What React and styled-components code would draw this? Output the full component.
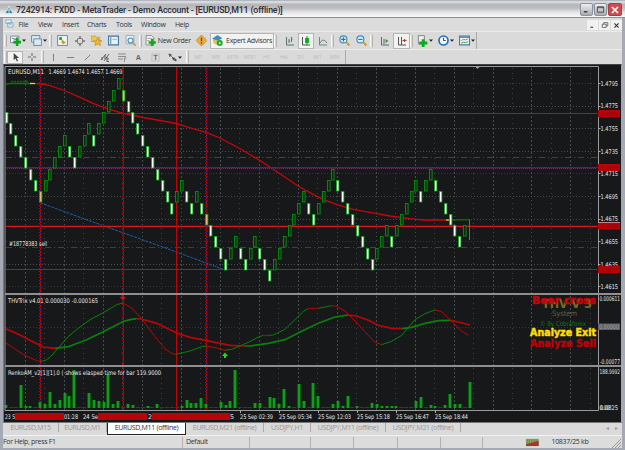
import React from 'react'
import styled, { createGlobalStyle } from 'styled-components'

const GlobalStyle = createGlobalStyle`
    * {
        box-sizing: border-box;
    }
    body {
        margin: 0;
        overflow: hidden;
        background: #dedede;
    }
`

const Frame = styled.div`
    width: 625px;
    height: 450px;
    display: flex;
    flex-direction: column;
    padding: 0 3px 2px;
    background: #a4a9b4;
    font-family: 'Open Sans', 'Noto Sans', sans-serif;
    font-size: 7px;
    letter-spacing: -0.32px;
    line-height: 10px;
    color: #333;
    white-space: nowrap;
`

const TitleBar = styled.header`
    height: 18px;
    flex: none;
    margin: 0 -3px;
    padding: 2px 3px 0 4px;
    display: flex;
    align-items: center;
    border-bottom: 1px solid #8a8f9a;
    background: linear-gradient(#8b929f 0, #d8dade 1px, #d4d5d8 3px, #b7b7b9 4px, #bdbdbf 8px, #e3e3e4 12px, #fafafa 17px);
`

const Title = styled.h1`
    margin: 0 auto 0 2px;
    font-family: Roboto, sans-serif;
    font-size: 8.8px;
    font-weight: 500;
    letter-spacing: -0.17px;
    color: #2c2e36;
`

const WinButton = styled.button`
    width: ${p => (p.$close ? 14 : 13)}px;
    height: 13px;
    margin-left: 1px;
    padding: 0;
    display: grid;
    place-items: center;
    color: ${p => (p.$close ? '#fff' : '#333')};
    border: 1px solid ${p => (p.$close ? '#a83e42' : '#8d929e')};
    border-radius: 2px;
    background: ${p => (p.$close ? '#cf4c50' : 'linear-gradient(#eeeef0, #a9abb3)')};
`

const MenuBar = styled.nav`
    height: 13px;
    flex: none;
    padding: 1px 0 0 2px;
    display: flex;
    align-items: center;
    background: #dcdcdd;
`

const MenuItem = styled.span`
    width: ${p => p.$w}px;
`

const ChildButtons = styled.div`
    display: flex;
    gap: 1px;
    margin-left: auto;
`

const ChildButton = styled.span`
    width: 11px;
    height: 10px;
    display: grid;
    place-items: center;
    background: #f1f1f1;
`

const Toolbar = styled.div`
    height: ${p => p.$h}px;
    flex: none;
    padding-left: 1px;
    display: flex;
    align-items: center;
    background: #dadadb;
    border-top: 1px solid #ececec;
`

const Strip = styled.div`
    width: ${p => p.$w}px;
    height: 100%;
    display: flex;
    align-items: center;
    border-right: 1px solid #aaa;
`

const Tool = styled.span`
    width: ${p => p.$w || 17}px;
    height: ${p => p.$h || 16}px;
    display: flex;
    align-items: center;
    justify-content: center;
    gap: ${p => p.$gap || 0}px;
    flex: none;
    background: ${p => (p.$on ? '#f2f2f2' : 'transparent')};
    border: 1px solid ${p => (p.$on ? '#b5b5b5' : 'transparent')};
`

const Grip = styled.i`
    width: 3px;
    height: 12px;
    flex: none;
    margin: 0 ${p => p.$gap || 0}px 0 0;
    border-left: 1px solid #f8f8f8;
    border-right: 1px solid #b7b2a8;
`

const Period = styled.span`
    width: 17px;
    text-align: center;
    font-size: 6px;
    color: #bdbbb7;
`

const ChartArea = styled.main`
    height: 358px;
    flex: none;
    border-left: 1px solid #777;
    border-right: 1px solid #aaa;
    border-top: 1px solid #444;
    background: #17181a;
    & > svg {
        display: block;
    }
`

const Tabs = styled.div`
    height: 13px;
    flex: none;
    display: flex;
    align-items: flex-start;
    background: #dadada;
    color: #9b9791;
    border-top: 1px solid #777;
`

const Tab = styled.span`
    width: ${p => p.$w}px;
    height: ${p => (p.$active ? 12 : 9)}px;
    line-height: 10px;
    text-align: center;
    color: ${p => (p.$active ? '#333' : 'inherit')};
    background: ${p => (p.$active ? '#fff' : 'transparent')};
    border-right: 1px solid ${p => (p.$active ? '#222' : '#aaa')};
    border-left: ${p => (p.$active ? '1px solid #222' : 'none')};
    border-bottom: ${p => (p.$active ? '1px solid #222' : 'none')};
`

const TabArrows = styled.span`
    margin-left: auto;
    padding-right: 4px;
    display: flex;
    gap: 7px;
    font-size: 6px;
`

const StatusBar = styled.footer`
    flex: 1;
    display: flex;
    align-items: center;
    background: #dcdcdc;
    border-top: 1px solid #f2f2f2;
`

const StatusCell = styled.span`
    width: ${p => p.$w}px;
    height: 11px;
    padding-left: ${p => p.$pad || 0}px;
    display: flex;
    align-items: center;
    gap: 12px;
    border-right: 1px solid ${p => (p.$last ? 'transparent' : '#b5b2ac')};
`

const SizeGrip = styled.svg`
    margin: auto 1px 0 auto;
`

const LEFT = 4
const RIGHT = 621

// top level of every renko brick, counted in bricks down from the high
const bricks = [
    3, 4, 5, 6, 7, 8, 9, 10, 9, 8, 7, 6, 5, 6, 7, 6, 5, 4, 5, 4, 3, 2, 1, 0,
    1, 2, 3, 4, 5, 6, 7, 8, 9, 10, 11, 10, 9, 10, 11, 10, 11, 12, 13, 14, 15, 16, 15, 14,
    15, 16, 15, 14, 15, 16, 17, 16, 15, 14, 13, 12, 11, 10, 11, 12, 11, 10, 9, 8, 9, 10, 11, 12,
    13, 14, 15, 16, 15, 14, 13, 14, 13, 12, 11, 10, 9, 10, 9, 8, 9, 10, 11, 12, 13, 14, 13,
]
const marked = [7, 24, 41]

const volumes = {
    0: 3, 3: 23, 4: 2, 5: 2, 7: 6, 8: 4, 9: 16, 10: 4, 11: 8, 12: 15, 13: 12, 14: 38, 17: 15, 18: 8, 19: 7,
    20: 6, 21: 34, 22: 4, 23: 7, 25: 4, 26: 3, 29: 2, 31: 4, 36: 2, 37: 8, 38: 5, 39: 5, 40: 10, 41: 4,
    44: 6, 45: 3, 46: 7, 47: 38, 51: 5, 52: 5, 54: 11, 55: 10, 56: 4, 57: 19, 58: 2, 60: 24, 61: 7, 63: 25, 64: 12,
    67: 4, 68: 7, 69: 2, 70: 12, 72: 2, 75: 5, 76: 4, 77: 2, 78: 2, 79: 2, 80: 2, 84: 7, 85: 11, 87: 3, 88: 2,
    90: 3, 91: 14, 92: 4, 93: 4, 95: 26,
}

const barX = i => 6 + 4.88 * i
const levelY = k => 78.2 + 11.3 * k

const RED = '#bd0408'
const GREEN = '#0b800b'

// oscillator curves, three units to a pixel
const slow = [
    [RED, '18,122 60,141 100,162 130,177 165,181'],
    [GREEN, '165,181 205,176 260,155 310,131 368,101 390,95 410,92'],
    [RED, '410,92 425,93 470,106 530,135 570,148 620,158 690,172 735,174'],
    [GREEN, '735,174 750,174 805,166 855,155 905,130 955,106 1005,87 1045,81'],
    [RED, '1045,81 1070,84 1105,97 1135,112 1175,121 1205,122'],
    [GREEN, '1205,122 1235,118 1275,106 1315,98 1350,97'],
    [RED, '1350,97 1375,102 1410,111'],
]
const fast = [
    [RED, '18,165 70,200 110,218 120,220'],
    [GREEN, '120,220 135,218 150,208 175,180 205,145 240,117 270,95 310,74 350,50 368,45'],
    [RED, '368,45 395,60 425,92 460,140 495,183 515,196 528,199'],
    [GREEN, '528,199 570,189 605,176 620,174'],
    [RED, '620,174 650,180 675,187'],
    [GREEN, '675,187 695,184 745,163 775,147 790,142'],
    [RED, '790,142 805,142'],
    [GREEN, '805,142 820,141 855,124 885,95 910,70 925,62'],
    [RED, '925,61 955,61'],
    [GREEN, '955,61 995,53'],
    [RED, '995,53 1010,55 1035,69 1065,99 1105,142 1123,162 1145,170'],
    [GREEN, '1145,170 1175,160 1205,142 1245,95 1275,77 1305,66'],
    [RED, '1305,66 1325,71 1345,90 1385,130 1405,141'],
]

const Txt = ({ x, y, w, size = 6.4, fill = '#e6e6e6', children, ...rest }) => (
    <text x={x} y={y} textLength={w} lengthAdjust="spacingAndGlyphs" fontSize={size} fill={fill} {...rest}>
        {children}
    </text>
)

const Grid = () => (
    <g stroke="#4b5358" strokeWidth="1" shapeRendering="crispEdges">
        {Array.from({ length: 30 }, (_, n) => (
            <line
                key={n}
                x1={Math.round(25 + 19.48 * n) + 0.5} x2={Math.round(25 + 19.48 * n) + 0.5}
                y1="68" y2="410"
                strokeDasharray={n % 2 ? '1 4' : '1.500 2.500'}
                opacity={n % 2 ? 0.7 : 0.9}
            />
        ))}
        {Array.from({ length: 10 }, (_, n) => (
            <line
                key={n}
                x1="6" x2="597"
                y1={Math.round(83 + 22.6 * n) + 0.5} y2={Math.round(83 + 22.6 * n) + 0.5}
                strokeDasharray="1 2"
                opacity={[0, 4, 7, 9].includes(n) ? 0.55 : 0.9}
            />
        ))}
        <line x1="6" x2="597" y1="327.5" y2="327.5" strokeDasharray="1 2" opacity="0.5" />
    </g>
)

const Levels = () => (
    <g fill="none" stroke="#c80a0e" strokeWidth="1" shapeRendering="crispEdges">
        <path d="M6 157.5H597" strokeDasharray="6 3 1 3" />
        <path d="M6 167.500H597" strokeDasharray="1 1" />
        <path d="M7 168.500H597" strokeDasharray="1 1" />
        <path d="M6 168.500H597" stroke="#3a1038" strokeDasharray="1 1" />
        <path d="M6 225.5H597" stroke="#701014" strokeDasharray="1 1" />
        <path d="M6 247.5H597" stroke="#086808" strokeDasharray="6 3 1 3" />
        <rect x="6" y="113" width="591" height="1" fill="#c80a0e" stroke="none" />
        <rect x="6" y="226" width="591" height="1" fill="#d9161b" stroke="none" />
        <rect x="6" y="269" width="591" height="1" fill="#c80a0e" stroke="none" />
        <path d="M176.5 67V410" stroke={RED} />
        {[40, 123, 206].map(x => (
            <g key={x} stroke={RED}>
                <path d={`M${x - 0.5} 67V410`} strokeDasharray="1 2" />
                <path d={`M${x + 0.5} 68V410`} strokeDasharray="2 1" />
                <path d={`M${x + 0.5} 67V410`} stroke="#2b1160" strokeDasharray="1 2" />
            </g>
        ))}
    </g>
)

const Bricks = () => (
    <g>
        {bricks.map((k, i) => {
            const up = i > 0 && k < bricks[i - 1]
            const x = Math.round(barX(i) - 1.5)
            const fill = up ? '#0b2a0d' : marked.includes(i) ? '#e8b878' : '#fff'
            return (
                <rect
                    key={i} x={x + 0.5} y={Math.round(levelY(k)) + 0.5}
                    width={up ? 2.6 : 2.4} height="10.5"
                    fill={fill} stroke={up ? '#0a8f12' : '#12a51a'} strokeWidth={up ? 0.9 : 0.8}
                />
            )
        })}
        <path d="M469.5 219.5V240" stroke="#12a51a" />
    </g>
)

const Average = () => (
    <g fill="none" strokeWidth="1.3">
        <path d="M6 84.3L10 83.5H31" stroke="#0a750a" />
        <path d="M11 81.500H28" stroke="#0a650a" strokeDasharray="2 1" />
        <path d="M30 83.5H35" stroke="#e6dc1c" />
        <path d="M70 73L94 81L123 89" stroke={RED} strokeWidth=".8" strokeDasharray="1 4" />
        <polyline
            stroke="#c8060b"
            points="35,83.6 43,84 50,85.7 63,90 80,97.3 93,103.3 107,108.7 123,113.3 143,117.5 160,120.5 176,123.5 192,128.3 206,132.3 220,138 241,149.3 262,161.7 281,174.5 298,186 314,194.8 323,199.3 337,204.7 353,209.3 370,212.3 390,216 410,218.7 423,220 446,220"
        />
        <path d="M446 220H451" stroke="#e6dc1c" />
        <path d="M451 219.8H470" stroke="#0a700a" />
        <path d="M40 202.7L90 221L160 246L225 270" stroke="#1c5fae" strokeWidth="1" strokeDasharray="3 1" />
    </g>
)

const Volume = () => (
    <g>
        {Array.from({ length: 96 }, (_, i) => {
            const h = volumes[i] || 1
            return (
                <React.Fragment key={i}>
                    <rect x={Math.round(barX(i) - 2)} y={408 - h} width="4" height={h} fill="#075a0a" />
                    {h > 1 && <rect x={Math.round(barX(i) - 2) + 1} y={408 - h} width="2" height={h} fill="#149a22" />}
                </React.Fragment>
            )
        })}
    </g>
)

const timeMarks = [
    [240, '25 Sep 02:39'], [279, '25 Sep 05:34'], [318, '25 Sep 12:03'],
    [357, '25 Sep 15:18'], [396, '25 Sep 16:47'], [435, '25 Sep 18:44'],
]

const Axes = () => (
    <g>
        <path d="M5 66.5H598.5V410.5H5Z" fill="none" stroke="#9a9a9a" />
        <path d="M5 294H621M5 366H621" stroke="#8f8f8f" strokeWidth="2" />
        {Array.from({ length: 10 }, (_, n) => (
            <g key={n}>
                <path d={`M598 ${Math.round(83 + 22.6 * n) + 0.5}h2.5`} stroke="#aaa" />
                <Txt x="600.5" y={85.8 + 22.6 * n} w="17.5">{(1.4795 - 0.002 * n).toFixed(4)}</Txt>
            </g>
        ))}
        {[[110, '1.4769'], [164, '1.4720'], [222.5, '1.4669'], [266, '1.4631']].map(([y, v]) => (
            <g key={y}>
                <rect x="598" y={y} width="22" height="7" fill="#b60408" />
                <Txt x="601" y={y + 5.8} w="17" size="5.5" fill="#8c0508">{v}</Txt>
            </g>
        ))}
        <path d="M598 222.5H620" stroke="#e0a0a0" strokeWidth=".8" />
        <Txt x="599.5" y="301" w="20.5">0.000611</Txt>
        <rect x="598" y="323.5" width="22" height="6.5" fill="#5d6064" />
        <Txt x="599" y="329" w="20" fill="#a2a4a6">0.00000</Txt>
        <Txt x="600" y="363.5" w="20">-0.00077</Txt>
        <Txt x="599.5" y="373.5" w="20.5">188.9992</Txt>
        <Txt x="599.5" y="409.5" w="10">0.00</Txt>
        <Txt x="600" y="409.5" w="18">0.0825</Txt>
        <Txt x="5" y="418.5" w="10">23 S</Txt>
        <Txt x="64" y="418.5" w="14">01:28</Txt>
        <Txt x="83" y="418.5" w="15">24 Se</Txt>
        <Txt x="148" y="418.5" w="4">2</Txt>
        <Txt x="230" y="418.5" w="4">5</Txt>
        <path d="M15 413h49v7H15ZM98 413h49v7H98ZM152 413h78v7H152Z" fill="#b60408" />
        {timeMarks.map(([x, t]) => (
            <g key={x}>
                <path d={`M${x + 0.5} 410v3`} stroke="#aaa" />
                <Txt x={x} y="418.5" w="33">{t}</Txt>
            </g>
        ))}
        <path d="M475 66.5h5l-2.5 2.5z" fill="#9aa0b0" />
    </g>
)

const Chart = () => (
    <svg
        width={RIGHT - LEFT} height="356" viewBox={`${LEFT} 65 ${RIGHT - LEFT} 356`}
        fontFamily="'DejaVu Sans Condensed', 'DejaVu Sans', sans-serif" letterSpacing="0"
    >
        <Grid />
        <Average />
        <Levels />
        <Bricks />
        <Txt x="8" y="73.5" w="36">EURUSD,M11</Txt>
        <Txt x="48.5" y="73.5" w="74">1.4669 1.4674 1.4657 1.4669</Txt>
        <Txt x="9" y="246" w="38">#18778383 sell</Txt>
        <g transform="translate(0 288) scale(.33333)" fill="none">
            {slow.map(([c, pts]) => <polyline key={pts} points={pts} stroke={c} strokeWidth="5" />)}
            {fast.map(([c, pts]) => <polyline key={pts} points={pts} stroke={c} strokeWidth="3" />)}
        </g>
        <path d="M121.5 295v2h-2l3.3 3.5l3.3-3.5h-2v-2z" fill="#d3080c" />
        <path d="M224 358v-2h-2l3-3.5l3 3.5h-2v2z" fill="#16e01c" />
        <Volume />
        <Txt x="8" y="302.5" w="90">THVTrix v4.01 0.000030 -0.000165</Txt>
        <Txt x="8" y="375" w="153">RenkoAM_v2[1][1].0  ( shows elasped time for bar 119.9000</Txt>
        <g fontFamily="'DejaVu Sans', sans-serif">
            <Txt x="542" y="307.5" w="50" size="11.5" fill="#6d7028" fontWeight="700">THV V 3</Txt>
            <Txt x="552" y="316" w="25" size="7.5" fill="#6a6036">System</Txt>
            <Txt x="540" y="326" w="46" size="6.5" fill="#0c7a10">© By Cobraforex</Txt>
            <g fontWeight="700" strokeWidth=".5">
                <Txt x="532" y="304" w="64" size="10.3" fill="#c4060a" stroke="#c4060a">Bear cross</Txt>
                <Txt x="530" y="336.3" w="66" size="10.3" fill="#ffdc0a" stroke="#ffdc0a">Analyze Exit</Txt>
                <Txt x="530" y="347.3" w="66" size="10.3" fill="#b80408" stroke="#b80408">Analyze Sell</Txt>
            </g>
        </g>
        <Axes />
    </svg>
)

const art = {
    logo: <path d="M1 8.500L5 1L9 8.500Z M5 1V8.500M3 5H7" fill="#2d8da3" stroke="#e8f2f4" strokeWidth=".7" />,
    child: <g fill="#e8f3f8" stroke="#6ba0bd" strokeWidth=".8"><path d="M1 1h6v4H1zM3 4h6v5H3z" /><path d="M4 7l2-1 2 1" /></g>,
    newChart: <g><path d="M.5 1h7.500v6H.5z" fill="#f4f4f4" stroke="#74889a" strokeWidth=".8" /><path d="M2 3l3 1 2-2" fill="none" stroke="#59809a" /><path d="M6.500 3v7M3 6.500h7" stroke="#08a818" strokeWidth="2.400" /></g>,
    profiles: <g fill="#d8e9f4" stroke="#5787a7" strokeWidth=".8"><path d="M.5 .5h7.500v6H.5z" /><path d="M2.500 3.500h7v6h-7z" /></g>,
    market: <g><path d="M.5 .5h9v9h-9z" fill="#e9f5fb" stroke="#4b8bad" strokeWidth=".8" /><path d="M2 2h2.500v2.500H2z" fill="#12a52b" /><path d="M4.500 4l3.500 3-2.500 1.500-1.500-2z" fill="#d69a13" /></g>,
    data: <g fill="none" stroke="#777"><circle cx="5" cy="5" r="3" /><path d="M5 0v3M5 7v3M0 5h3M7 5h3" strokeWidth="1.400" /></g>,
    favorites: <g><path d="M0 1h4l1 1h3v4H0z" fill="#ecc557" stroke="#b48829" strokeWidth=".5" /><path d="M6 3l1 2 3 .3-2 1.500.6 2.700L6 8.300l-2.500 1.200.6-2.600-2-1.500h2.700z" fill="#f1b930" stroke="#b77f17" strokeWidth=".5" /></g>,
    terminal: <g><path d="M.5 1h9v8h-9z" fill="#e6f1f7" stroke="#3f7898" /><path d="M2.500 2v6" stroke="#65889b" /><path d="M4 4h4" stroke="#a4bdc9" /></g>,
    tester: <g fill="none"><path d="M1 .5h7v7.500H1z" fill="#edf4f8" stroke="#7fa0b2" strokeWidth=".7" /><circle cx="5" cy="5" r="2.300" stroke="#468cb0" /><path d="M7 7l3 3" stroke="#d2a035" strokeWidth="1.500" /></g>,
    order: <g><path d="M1 .5h5l2 2V9H1z" fill="#f5f5f5" stroke="#777" strokeWidth=".7" /><path d="M2 3h4M2 5h2" stroke="#888" strokeWidth=".7" /><path d="M6.500 3.500V10M3.200 6.800h6.600" stroke="#09ad1b" strokeWidth="2.400" /></g>,
    warn: <g><path d="M5 0l5 5-5 5-5-5z" fill="#ecae42" stroke="#bb7d20" strokeWidth=".6" /><path d="M5 2.200v3.500M5 6.700v1.200" stroke="#744309" strokeWidth="1.200" /></g>,
    expert: <g><circle cx="4.500" cy="5" r="3.600" fill="#e8bc5c" /><path d="M0 3.500l5-3.500 4.500 3L5 5z" fill="#3e91b6" /><circle cx="7" cy="7.300" r="2.700" fill="#16aa28" /><path d="M6.300 6v2.700l2-1.300z" fill="#fff" /></g>,
    bars: <path d="M1.500 1v8H9M4 3v4M6.500 1v5M4 5h1M6 3h1.500" fill="none" stroke="#567568" strokeWidth="1" />,
    candle: <g><path d="M1.500 1v8H9" fill="none" stroke="#555" /><path d="M4 2h4v5H4z" fill="#18b82a" /><path d="M6 0v9" stroke="#138d20" /></g>,
    line: <path d="M1.500 1v8H9M2 7q3-6 7 0" fill="none" stroke="#63806b" strokeWidth=".9" />,
    zoomIn: <g fill="none"><circle cx="4" cy="4" r="3.200" fill="#d6effa" stroke="#3e8cb4" /><path d="M2 4h4M4 2v4" stroke="#25779f" /><path d="M6.500 6.500l3 3" stroke="#d29a2a" strokeWidth="1.800" /></g>,
    zoomOut: <g fill="none"><circle cx="4" cy="4" r="3.200" fill="#d6effa" stroke="#3e8cb4" /><path d="M2 4h4" stroke="#25779f" /><path d="M6.500 6.500l3 3" stroke="#d29a2a" strokeWidth="1.800" /></g>,
    scroll: <g><path d="M1.500 1v8H9" fill="none" stroke="#666" /><path d="M4 3v5" stroke="#666" /><path d="M5.500 3v4l3-2z" fill="#25a333" /></g>,
    shift: <g><path d="M1.500 1v8H9M4.500 1v8" fill="none" stroke="#555" /><path d="M5.500 4.500h4M7.500 3v3" stroke="#b93a25" strokeWidth="1.200" /></g>,
    indicator: <g><path d="M2 .5h5v7H2z" fill="#eee" stroke="#777" strokeWidth=".7" /><path d="M6 3.500V10M2.700 6.700h6.800" stroke="#09ad1b" strokeWidth="2.400" /></g>,
    clock: <g><circle cx="5" cy="5" r="4.100" fill="#edf6fb" stroke="#2b6da6" strokeWidth="1.500" /><path d="M5 2.500V5h2" fill="none" stroke="#333" strokeWidth=".8" /></g>,
    template: <g><path d="M.5 1h9v8h-9z" fill="#f1f6f9" stroke="#477d9e" /><path d="M1 2h8" stroke="#5d93b7" strokeWidth="1.500" /><path d="M2 5l2-1 2 .5 2-1" fill="none" stroke="#d05b42" strokeWidth=".8" /><path d="M2 7.500l2-1 2 .5 2-1" fill="none" stroke="#20903a" strokeWidth=".8" /></g>,
    cursor: <path d="M3 0v8l2-2 1.500 3.500 1.300-.6L6.300 5.500H9z" fill="#444" />,
    cross: <path d="M5 1v3M5 6v3M1 5h3M6 5h3" stroke="#666" />,
    vline: <path d="M5 1v8" stroke="#777" />,
    hline: <path d="M1 5h8" stroke="#777" />,
    trend: <path d="M2 8l6-6" stroke="#777" />,
    channel: <path d="M1 8l5-6M4 9l5-7M2 5v3M5 3v4M7 5v5M7 7h2M7 9.500h2" stroke="#555" strokeWidth=".9" />,
    fibo: <path d="M1 2h8M1 4.500h8M1 7h5M7.500 6v4M7.500 6h2" stroke="#777" strokeWidth=".8" fill="none" />,
    letter: <text x="2" y="8" fontSize="8" fontWeight="700" fontFamily="Liberation Sans" fill="#666">A</text>,
    label: <g><path d="M1 1h8v8H1z" fill="none" stroke="#888" strokeWidth=".7" strokeDasharray="1 1" /><text x="2.800" y="8" fontSize="7.500" fontWeight="700" fontFamily="Liberation Sans" fill="#666">T</text></g>,
    arrows: <path d="M1 1l3 1-2 2zM3 3l3 3M5 5l3 1-2 2zM7 8l2-1v2z" fill="#444" stroke="#444" strokeWidth=".7" />,
    min: <path d="M2 7.500h4" stroke="#333" strokeWidth="1.500" />,
    max: <path d="M1.500 2h7v6h-7zM1.500 3h7" fill="none" stroke="#444" />,
    restore: <path d="M1.500 4h5v4h-5zM3.500 4V2h5v4h-2" fill="none" stroke="#555" />,
    close: <path d="M2 2l6 6M8 2L2 8" stroke="currentColor" strokeWidth="1.600" />,
    net: <g><path d="M0 1h14v8H0z" fill="#6f8a3a" /><path d="M1 1v8M3 1v8M5 1v8M7 1v8M9 1v8M11 1v8M13 1v8" stroke="#b6c58c" strokeWidth=".5" /><path d="M0 9V7l14-4v6z" fill="#a93434" /></g>,
}

const Icon = ({ name, size = 11, w = 10 }) => (
    <svg width={(size * w) / 10} height={size} viewBox={`0 0 ${w} 10`}>{art[name]}</svg>
)

const Caret = () => (
    <svg width="5" height="3" viewBox="0 0 5 3"><path d="M1 .5h4L3 2.800z" fill="#222" /></svg>
)

const menu = [['File', 19.500], ['View', 24], ['Insert', 25], ['Charts', 29], ['Tools', 25], ['Window', 34], ['Help', 20]]
const periods = ['M1', 'M5', 'M15', 'M30', 'H1', 'H4', 'D1', 'W1', 'MN']

function App() {
    return (
        <Frame>
            <GlobalStyle />
            <TitleBar>
                <Icon name="logo" size={10} />
                <Title>7242914: FXDD - MetaTrader - Demo Account - [EURUSD,M11 (offline)]</Title>
                <WinButton><Icon name="min" size={9} /></WinButton>
                <WinButton><Icon name="max" size={9} /></WinButton>
                <WinButton $close><Icon name="close" size={10} /></WinButton>
            </TitleBar>
            <MenuBar>
                <MenuItem $w={13.5}><Icon name="child" size={9} /></MenuItem>
                {menu.map(([m, w]) => <MenuItem key={m} $w={w}>{m}</MenuItem>)}
                <ChildButtons>
                    <ChildButton><Icon name="min" size={7} /></ChildButton>
                    <ChildButton><Icon name="restore" size={8} /></ChildButton>
                    <ChildButton><Icon name="close" size={7} /></ChildButton>
                </ChildButtons>
            </MenuBar>
            <Toolbar $h={18}>
                <Strip $w={473}>
                    <Grip />
                    <Tool $w={21}><Icon name="newChart" /><Caret /></Tool>
                    <Tool $w={21}><Icon name="profiles" /><Caret /></Tool>
                    <Grip $gap={2} />
                    <Tool><Icon name="market" /></Tool>
                    <Tool><Icon name="data" size={10} /></Tool>
                    <Tool><Icon name="favorites" /></Tool>
                    <Tool><Icon name="terminal" /></Tool>
                    <Tool><Icon name="tester" /></Tool>
                    <Grip $gap={1} />
                    <Tool $w={50} $gap={1.5}><Icon name="order" />New Order</Tool>
                    <Tool><Icon name="warn" /></Tool>
                    <Tool $w={64} $on $gap={3}><Icon name="expert" />Expert Advisors</Tool>
                    <Grip $gap={4} />
                    <Tool><Icon name="bars" size={10} /></Tool>
                    <Tool $on $w={16}><Icon name="candle" size={10} /></Tool>
                    <Tool><Icon name="line" size={10} /></Tool>
                    <Grip $gap={2} />
                    <Tool><Icon name="zoomIn" /></Tool>
                    <Tool><Icon name="zoomOut" /></Tool>
                    <Grip $gap={3} />
                    <Tool><Icon name="scroll" size={10} /></Tool>
                    <Tool $on><Icon name="shift" size={10} /></Tool>
                    <Grip $gap={1} />
                    <Tool $w={21}><Icon name="indicator" size={12} /><Caret /></Tool>
                    <Tool $w={21}><Icon name="clock" size={11} /><Caret /></Tool>
                    <Tool $w={21}><Icon name="template" /><Caret /></Tool>
                </Strip>
            </Toolbar>
            <Toolbar $h={15}>
                <Strip $w={342}>
                    <Grip />
                    <Tool $on $w={16} $h={13}><Icon name="cursor" size={9} /></Tool>
                    <Tool $w={18} $h={13}><Icon name="cross" size={10} /></Tool>
                    <Grip />
                    <Tool $w={18} $h={13}><Icon name="vline" size={9} /></Tool>
                    <Tool $h={13}><Icon name="hline" size={9} /></Tool>
                    <Tool $h={13}><Icon name="trend" size={9} /></Tool>
                    <Tool $h={13}><Icon name="channel" size={10} /></Tool>
                    <Tool $h={13}><Icon name="fibo" size={10} /></Tool>
                    <Tool $h={13}><Icon name="letter" size={9} /></Tool>
                    <Tool $h={13}><Icon name="label" size={9} /></Tool>
                    <Tool $w={22} $h={13}><Icon name="arrows" size={9} /><Caret /></Tool>
                    <Grip $gap={1} />
                    {periods.map(p => <Period key={p}>{p}</Period>)}
                </Strip>
            </Toolbar>
            <ChartArea>
                <Chart />
            </ChartArea>
            <Tabs>
                <Tab $w={56}>EURUSD,M15</Tab>
                <Tab $w={48}>EURUSD,M1</Tab>
                <Tab $w={79} $active>EURUSD,M11 (offline)</Tab>
                <Tab $w={78}>EURUSD,M21 (offline)</Tab>
                <Tab $w={47}>USDJPY,H1</Tab>
                <Tab $w={75}>USDJPY,M11 (offline)</Tab>
                <Tab $w={75}>USDJPY,M21 (offline)</Tab>
                <TabArrows><span>◂</span><span>▸</span></TabArrows>
            </Tabs>
            <StatusBar>
                <StatusCell $w={180}>For Help, press F1</StatusCell>
                <StatusCell $w={67} $pad={3}>Default</StatusCell>
                <StatusCell $w={61} />
                <StatusCell $w={43} />
                <StatusCell $w={44} />
                <StatusCell $w={43} />
                <StatusCell $w={42} />
                <StatusCell $w={120} $pad={43} $last>
                    <Icon name="net" size={9} w={15} />
                    <span>10837/25 kb</span>
                </StatusCell>
                <SizeGrip width="9" height="9" viewBox="0 0 9 9">
                    <path d="M0 9L9 0M3 9L9 3M6 9L9 6" stroke="#9a9a9a" />
                </SizeGrip>
            </StatusBar>
        </Frame>
    )
}

export default App
